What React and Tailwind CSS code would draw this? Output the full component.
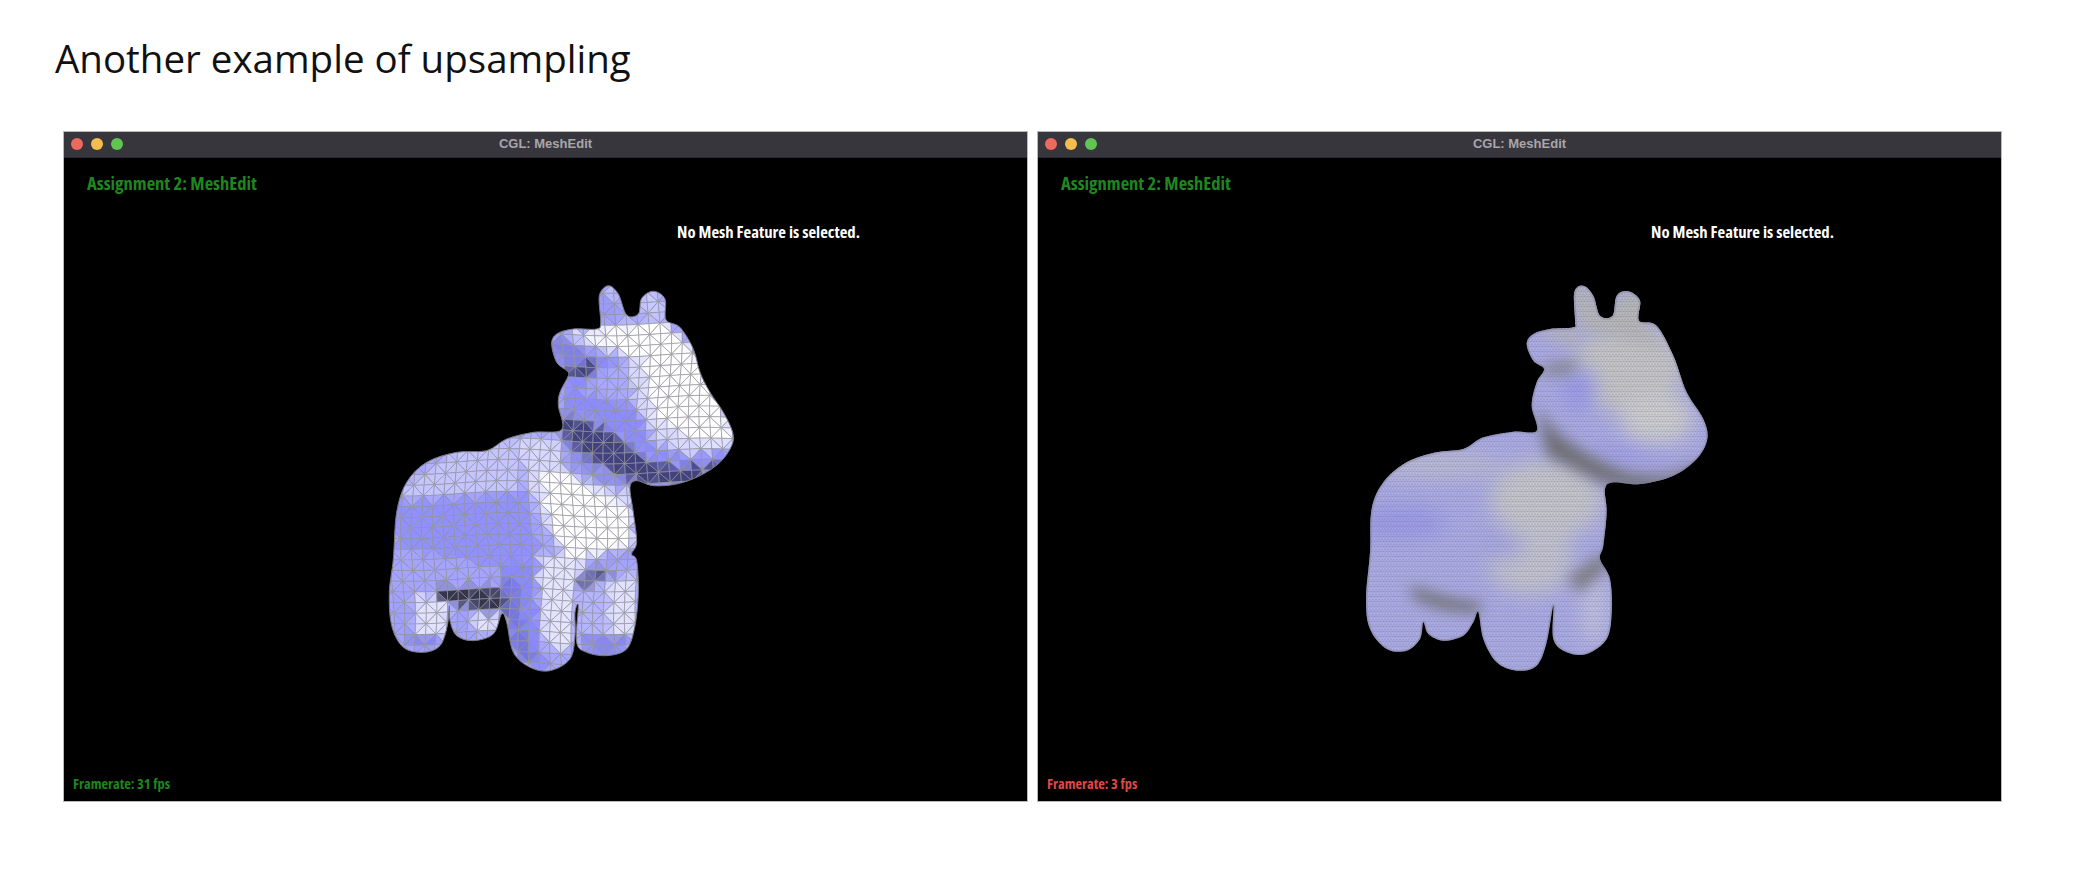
import React from 'react'

// cow outlines, in units of 1/3 px
const coarseOutline = [[722,190],[718,110],[745,80],[775,105],[800,168],[835,165],[845,118],[880,97],[915,120],[918,182],[960,205],[1000,270],[1020,340],[1050,400],[1090,460],[1118,520],[1115,560],[1080,610],[1020,650],[950,675],[880,680],[830,665],[810,685],[820,760],[830,850],[815,885],[830,905],[835,1000],[825,1100],[800,1170],[740,1190],[680,1180],[650,1150],[655,1040],[645,1060],[645,1130],[630,1200],[570,1235],[510,1225],[460,1180],[440,1090],[425,1065],[400,1125],[340,1145],[290,1130],[270,1085],[268,1040],[262,1100],[240,1160],[190,1180],[130,1165],[95,1100],[88,1000],[100,900],[110,760],[140,670],[200,610],[290,580],[380,575],[440,540],[520,520],[605,512],[595,440],[600,400],[625,350],[620,335],[590,310],[575,255],[590,225],[640,210],[710,210]]

const smoothOutline = [[705,185],[703,100],[730,80],[760,110],[780,170],[818,170],[830,110],[865,97],[900,125],[897,185],[950,200],[1000,290],[1040,400],[1090,480],[1102,540],[1070,600],[1000,650],[900,675],[820,670],[795,690],[800,760],[790,860],[780,900],[810,960],[815,1060],[800,1140],[740,1185],[680,1180],[640,1140],[640,1040],[620,1150],[590,1220],[530,1235],[470,1210],[430,1140],[415,1060],[400,1090],[370,1130],[310,1145],[265,1125],[250,1090],[240,1140],[200,1175],[140,1170],[90,1110],[78,1020],[90,880],[95,750],[130,670],[200,610],[290,580],[370,570],[430,535],[520,518],[590,515],[575,440],[590,370],[612,330],[580,305],[560,255],[580,225],[630,210],[700,205]]

// flat shaded patches of the coarse cow, later ones win
const patches = [
  ['#c4c4ff', [[130,680],[300,570],[480,540],[480,700],[130,720]]],
  ['#9090ff', [[100,730],[500,700],[540,880],[420,930],[100,860]]],
  ['#a4a4ff', [[80,860],[400,920],[430,1000],[230,990],[80,1000]]],
  ['#d8d8ff', [[480,540],[600,540],[620,640],[700,680],[820,700],[830,860],[700,890],[620,900],[560,800],[500,680]]],
  ['#ffffff', [[540,640],[640,650],[720,700],[815,760],[815,860],[700,890],[610,890],[570,800]]],
  ['#e4e4ff', [[530,890],[680,890],[640,1010],[640,1170],[550,1170],[540,1000]]],
  ['#8a8aff', [[420,920],[540,890],[530,1000],[550,1180],[570,1235],[500,1220],[450,1170]]],
  ['#7676e0', [[420,950],[470,970],[490,1100],[530,1230],[470,1190],[440,1060]]],
  ['#9c9cf8', [[640,960],[820,850],[830,900],[700,930],[660,1000]]],
  ['#5a5a92', [[660,1000],[770,930],[700,930],[650,980]]],
  ['#b4b4ff', [[655,1000],[830,940],[830,1130],[810,1170],[650,1170]]],
  ['#e2e2ff', [[745,970],[830,950],[830,1130],[750,1160]]],
  ['#8888f0', [[660,1130],[820,1130],[780,1190],[680,1180]]],
  ['#34344c', [[220,985],[420,990],[440,1060],[340,1050],[240,1020]]],
  ['#a0a0ff', [[90,1000],[165,1000],[160,1180],[100,1130]]],
  ['#e2e2ff', [[165,1000],[270,1030],[250,1140],[170,1130]]],
  ['#8888f0', [[130,1130],[250,1130],[190,1185]]],
  ['#a0a0ff', [[270,1030],[420,1060],[400,1130],[340,1145],[290,1130]]],
  ['#e2e2ff', [[340,1060],[420,1070],[400,1120],[345,1125]]],
  // head
  ['#ffffff', [[640,215],[910,185],[1000,270],[1118,520],[1110,545],[1000,545],[870,480],[850,420],[790,290],[720,250]]],
  ['#d8d8ff', [[790,290],[850,300],[880,470],[1000,545],[1115,545],[1110,575],[980,590],[880,545],[820,440]]],
  ['#8c8cff', [[625,350],[730,300],[790,290],[830,450],[880,545],[980,590],[1112,570],[1090,600],[950,620],[860,590],[730,500],[600,450]]],
  ['#a8a8ff', [[660,400],[740,330],[790,300],[830,450],[760,420]]],
  ['#42427e', [[596,460],[730,510],[860,600],[950,630],[1090,605],[1060,640],[950,680],[830,668],[700,610],[620,560],[600,510]]],
  ['#8f8ff0', [[600,520],[720,630],[820,670],[810,695],[710,670],[620,610]]],
  ['#8080e8', [[578,235],[610,240],[725,305],[640,350],[590,310]]],
  ['#34345c', [[620,330],[725,305],[700,340],[630,350]]],
  ['#f4f4ff', [[610,220],[720,210],[770,280],[720,270]]],
  ['#9a9aff', [[715,100],[745,80],[760,130],[790,170],[722,190]]],
  ['#f0f0ff', [[745,85],[775,105],[765,135]]],
  ['#c8c8ff', [[835,165],[850,110],[880,97],[918,130],[918,182]]],
]

const insidePolygon = (x, y, pts) => {
  let inside = false
  for (let i = 0, j = pts.length - 1; i < pts.length; j = i++) {
    const [xi, yi] = pts[i]
    const [xj, yj] = pts[j]
    if (yi > y !== yj > y && x < ((xj - xi) * (y - yi)) / (yj - yi) + xi) inside = !inside
  }
  return inside
}

// closed catmull-rom through the points
const toPath = (pts) => {
  const n = pts.length
  let d = `M${pts[0][0]} ${pts[0][1]}`
  for (let i = 0; i < n; i++) {
    const a = pts[(i - 1 + n) % n]
    const b = pts[i]
    const c = pts[(i + 1) % n]
    const e = pts[(i + 2) % n]
    d += `C${b[0] + (c[0] - a[0]) / 6} ${b[1] + (c[1] - a[1]) / 6} ${c[0] - (e[0] - b[0]) / 6} ${c[1] - (e[1] - b[1]) / 6} ${c[0]} ${c[1]}`
  }
  return d + 'Z'
}

const patchColor = (x, y) => {
  let color = '#a6a6ff'
  patches.forEach(([c, pts]) => {
    if (insidePolygon(x, y, pts)) color = c
  })
  return [1, 3, 5].map((k) => parseInt(color.slice(k, k + 2), 16))
}

// average a few samples so neighbouring facets step gently
const facetColor = (x, y) => {
  const samples = [[0, 0], [0, 0], [14, 0], [-14, 0], [0, 14], [0, -14]].map(([dx, dy]) => patchColor(x + dx, y + dy))
  const rgb = [0, 1, 2].map((k) => Math.round(samples.reduce((sum, s) => sum + s[k], 0) / samples.length))
  return `rgb(${rgb.join(',')})`
}

const buildFacets = () => {
  const size = 32
  const warp = (i, j) => {
    const x = i * size
    const y = j * size
    return [x + 7 * Math.sin(y / 80 + x / 200), y + 7 * Math.sin(x / 95)]
  }
  const facets = []
  for (let i = 2; i < 37; i++) {
    for (let j = 1; j < 40; j++) {
      const a = warp(i, j)
      const b = warp(i + 1, j)
      const c = warp(i + 1, j + 1)
      const d = warp(i, j + 1)
      const tris = (i + j) % 2 === 0 ? [[a, b, c], [a, c, d]] : [[a, b, d], [b, c, d]]
      tris.forEach((t) => {
        const cx = (t[0][0] + t[1][0] + t[2][0]) / 3
        const cy = (t[0][1] + t[1][1] + t[2][1]) / 3
        facets.push({ points: t.map((p) => p.join(',')).join(' '), color: facetColor(cx, cy) })
      })
    }
  }
  return facets
}

const facets = buildFacets()

const CoarseCow = () => (
  <svg viewBox="0 0 1200 1290" className="ml-[296px] h-[430px] w-[400px]">
    <defs>
      <clipPath id="coarseClip">
        <path d={toPath(coarseOutline)} />
      </clipPath>
      <filter id="slight">
        <feGaussianBlur stdDeviation="1.2" />
      </filter>
    </defs>
    <g filter="url(#slight)">
      <g clipPath="url(#coarseClip)">
        {facets.map((f, i) => (
          <polygon key={i} points={f.points} fill={f.color} stroke="#9c9ca6" strokeWidth="2" />
        ))}
      </g>
      <path d={toPath(coarseOutline)} fill="none" stroke="#77777f" strokeWidth="3" />
    </g>
  </svg>
)

const SmoothCow = () => (
  <svg viewBox="0 0 1200 1290" className="ml-[302px] h-[430px] w-[400px]">
    <defs>
      <clipPath id="smoothClip">
        <path d={toPath(smoothOutline)} />
      </clipPath>
      <filter id="soft" x="-30%" y="-30%" width="160%" height="160%">
        <feGaussianBlur stdDeviation="28" />
      </filter>
      <filter id="softer" x="-30%" y="-30%" width="160%" height="160%">
        <feGaussianBlur stdDeviation="20" />
      </filter>
      <pattern id="fineMesh" width="9" height="15" patternUnits="userSpaceOnUse">
        <path d="M0 0H9M0 7.5H9M0 0L4.5 7.5L0 15M9 0L4.5 7.5L9 15" fill="none" stroke="#66666e" strokeWidth="1.6" />
      </pattern>
    </defs>
    <g clipPath="url(#smoothClip)">
      <rect width="1200" height="1290" fill="#b2b2f4" />
      <g filter="url(#soft)">
        <ellipse cx="860" cy="330" rx="170" ry="130" fill="#cfcfd2" />
        <ellipse cx="950" cy="480" rx="110" ry="80" fill="#d8d8dc" />
        <ellipse cx="620" cy="720" rx="170" ry="120" fill="#cfcfd8" />
        <ellipse cx="570" cy="900" rx="130" ry="110" fill="#ccccdc" />
        <ellipse cx="300" cy="620" rx="190" ry="40" fill="#c4c4e2" />
        <ellipse cx="760" cy="1050" rx="30" ry="110" fill="#d0d0f0" />
        <ellipse cx="190" cy="790" rx="130" ry="50" fill="#a0a0f8" />
        <ellipse cx="480" cy="860" rx="70" ry="40" fill="#acacf0" />
        <ellipse cx="720" cy="390" rx="50" ry="70" fill="#a0a0fa" />
        <ellipse cx="880" cy="580" rx="120" ry="22" fill="#a0a0fa" />
      </g>
      <g filter="url(#softer)">
        <path d="M590 440C640 530 740 590 860 640C960 660 1040 640 1080 600L1060 650L900 695L780 670L620 590Z" fill="#72727a" />
        <path d="M210 980C300 1010 380 1030 430 1030L410 1065L300 1050L220 1020Z" fill="#75757d" />
        <path d="M680 960L790 880L810 920L720 1000Z" fill="#80808a" />
        <path d="M600 320L720 300L690 345L620 350Z" fill="#8a8a96" />
        <path d="M690 90L740 70L790 170L860 90L920 120L920 200L970 270L720 210Z" fill="#c0c0c2" />
        <path d="M590 215L700 205L720 265L620 235Z" fill="#c0c0c4" />
      </g>
      <rect width="1200" height="1290" fill="url(#fineMesh)" opacity="0.46" />
      <path d={toPath(smoothOutline)} fill="none" stroke="#77777f" strokeWidth="10" opacity="0.35" />
    </g>
  </svg>
)

const MeshWindow = ({ rate, rateClass, children }) => (
  <div className="flex h-[671px] w-[965px] shrink-0 flex-col overflow-hidden border border-[#b9b8bb]">
    <div className="relative flex h-[26px] shrink-0 items-center gap-2 border-b border-[#2a282e] bg-[#38363d] pb-px pl-[7px]">
      <span className="h-3 w-3 rounded-full bg-[#ee6a5f]" />
      <span className="h-3 w-3 rounded-full bg-[#f5bd4f]" />
      <span className="h-3 w-3 rounded-full bg-[#61c554]" />
      <span className="absolute inset-x-0 text-center font-['Liberation_Sans',sans-serif] text-[13px] font-bold text-[#a8a6ab]">
        CGL: MeshEdit
      </span>
    </div>
    <div className="flex min-h-0 flex-1 flex-col bg-black font-['Open_Sans',sans-serif] font-bold [font-stretch:75%]">
      <p className="mt-[13px] pl-[23px] text-[18.5px] leading-6 text-[#1f861f]">Assignment 2: MeshEdit</p>
      <p className="ml-[613px] mt-[27px] text-[16.7px] leading-5 text-white">No Mesh Feature is selected.</p>
      <div className="mt-[17px]">{children}</div>
      <p className={`mt-auto mb-[7px] pl-[9px] text-[14.4px] leading-5 ${rateClass}`}>{rate}</p>
    </div>
  </div>
)

export default function App() {
  return (
    <div className="h-[884px] w-[2096px] overflow-hidden bg-white">
      <h1 className="pl-[55px] pt-[31px] font-['Open_Sans',sans-serif] text-[38.5px] leading-[55px] font-normal text-[#111]">
        Another example of upsampling
      </h1>
      <div className="mt-[45px] flex gap-[9px] pl-[63px]">
        <MeshWindow rate="Framerate: 31 fps" rateClass="text-[#1f861f]">
          <CoarseCow />
        </MeshWindow>
        <MeshWindow rate="Framerate: 3 fps" rateClass="text-[#e0484a]">
          <SmoothCow />
        </MeshWindow>
      </div>
    </div>
  )
}
